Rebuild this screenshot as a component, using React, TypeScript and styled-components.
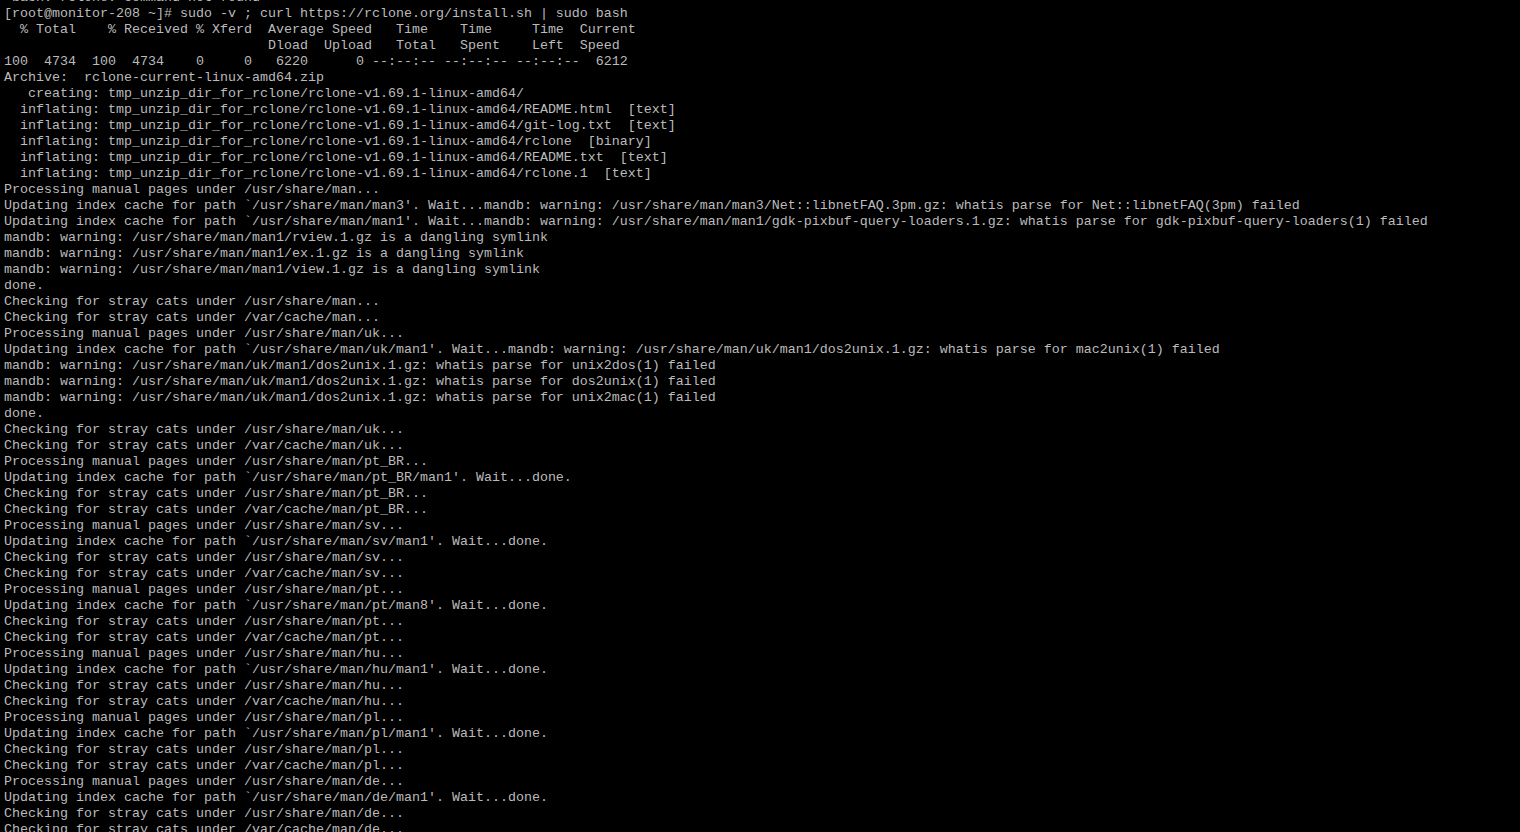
import React from "react";
import styled, { createGlobalStyle } from "styled-components";

const Global = createGlobalStyle`
  html, body { margin: 0; padding: 0; background: #000; }
  body { width: 1520px; height: 832px; overflow: hidden; }
`;

const Terminal = styled.div`
  width: 1520px;
  height: 832px;
  background: #000;
  overflow: hidden;
  box-sizing: border-box;
  padding: 0 0 0 4px;
`;

const Scroll = styled.div`
  display: flex;
  flex-direction: column;
  margin-top: -10px;
`;

const Line = styled.div`
  font-family: "Liberation Mono", "Courier New", monospace;
  font-size: 13.333px;
  line-height: 16px;
  height: 16px;
  color: #bbbbbb;
  white-space: pre;
`;

const dir = "tmp_unzip_dir_for_rclone/rclone-v1.69.1-linux-amd64/";

const checking = (p: string) => [
  `Checking for stray cats under /usr/share/man/${p}...`,
  `Checking for stray cats under /var/cache/man/${p}...`,
];

const section = (p: string, man: string) => [
  `Processing manual pages under /usr/share/man/${p}...`,
  `Updating index cache for path \`/usr/share/man/${p}/${man}'. Wait...done.`,
  ...checking(p),
];

const lines: string[] = [
  "-bash: rclone: command not found",
  "[root@monitor-208 ~]# sudo -v ; curl https://rclone.org/install.sh | sudo bash",
  "  % Total    % Received % Xferd  Average Speed   Time    Time     Time  Current",
  "                                 Dload  Upload   Total   Spent    Left  Speed",
  "100  4734  100  4734    0     0   6220      0 --:--:-- --:--:-- --:--:--  6212",
  "Archive:  rclone-current-linux-amd64.zip",
  `   creating: ${dir}`,
  `  inflating: ${dir}README.html  [text]`,
  `  inflating: ${dir}git-log.txt  [text]`,
  `  inflating: ${dir}rclone  [binary]`,
  `  inflating: ${dir}README.txt  [text]`,
  `  inflating: ${dir}rclone.1  [text]`,
  "Processing manual pages under /usr/share/man...",
  "Updating index cache for path `/usr/share/man/man3'. Wait...mandb: warning: /usr/share/man/man3/Net::libnetFAQ.3pm.gz: whatis parse for Net::libnetFAQ(3pm) failed",
  "Updating index cache for path `/usr/share/man/man1'. Wait...mandb: warning: /usr/share/man/man1/gdk-pixbuf-query-loaders.1.gz: whatis parse for gdk-pixbuf-query-loaders(1) failed",
  "mandb: warning: /usr/share/man/man1/rview.1.gz is a dangling symlink",
  "mandb: warning: /usr/share/man/man1/ex.1.gz is a dangling symlink",
  "mandb: warning: /usr/share/man/man1/view.1.gz is a dangling symlink",
  "done.",
  "Checking for stray cats under /usr/share/man...",
  "Checking for stray cats under /var/cache/man...",
  "Processing manual pages under /usr/share/man/uk...",
  "Updating index cache for path `/usr/share/man/uk/man1'. Wait...mandb: warning: /usr/share/man/uk/man1/dos2unix.1.gz: whatis parse for mac2unix(1) failed",
  "mandb: warning: /usr/share/man/uk/man1/dos2unix.1.gz: whatis parse for unix2dos(1) failed",
  "mandb: warning: /usr/share/man/uk/man1/dos2unix.1.gz: whatis parse for dos2unix(1) failed",
  "mandb: warning: /usr/share/man/uk/man1/dos2unix.1.gz: whatis parse for unix2mac(1) failed",
  "done.",
  ...checking("uk"),
  ...section("pt_BR", "man1"),
  ...section("sv", "man1"),
  ...section("pt", "man8"),
  ...section("hu", "man1"),
  ...section("pl", "man1"),
  ...section("de", "man1"),
];

export default function App() {
  return (
    <>
      <Global />
      <Terminal>
        <Scroll>
          {lines.map((l, i) => (
            <Line key={i}>{l}</Line>
          ))}
        </Scroll>
      </Terminal>
    </>
  );
}
